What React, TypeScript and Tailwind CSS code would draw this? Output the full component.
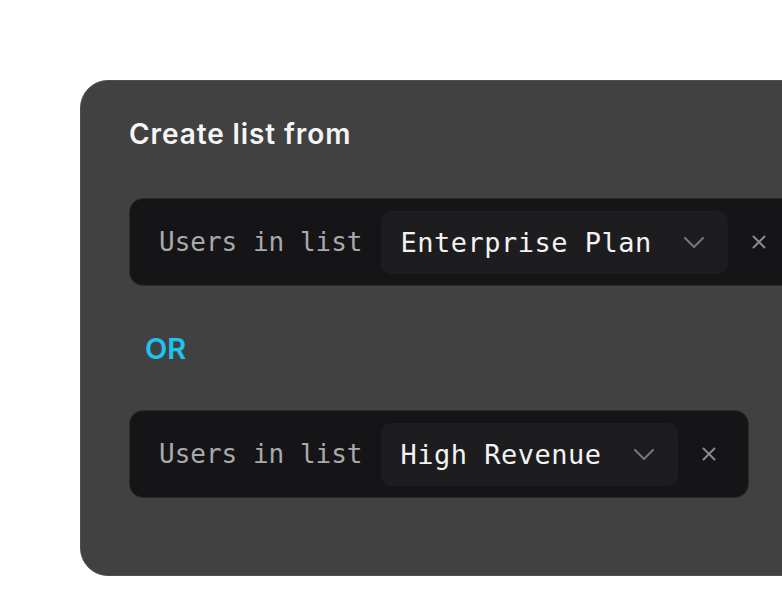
import React from 'react';

interface ListRowProps {
  value: string;
}

const mono = { fontFamily: '"DejaVu Sans Mono", "Liberation Mono", monospace' };

function Chevron() {
  return (
    <svg width="20" height="11" viewBox="0 0 20 11" fill="none" className="shrink-0">
      <polyline points="1,1 10,10 19,1" stroke="#777779" strokeWidth="2" strokeLinecap="round" strokeLinejoin="round" />
    </svg>
  );
}

function CloseIcon() {
  return (
    <svg width="14" height="14" viewBox="0 0 14 14" fill="none" className="shrink-0">
      <path d="M1.5 1.5l11 11M12.5 1.5l-11 11" stroke="#8a8a8c" strokeWidth="2" strokeLinecap="round" />
    </svg>
  );
}

// One "Users in list [select] x" filter row
function ListRow({ value }: ListRowProps) {
  return (
    <div className="inline-flex items-center h-[88px] rounded-[14px] bg-[#151517] border border-[#2c2c2e] pl-[29px] pr-[32px] shrink-0">
      <span className="text-[26px] leading-none text-[#a9a9ab] whitespace-nowrap" style={mono}>
        Users in list
      </span>
      <div className="ml-[18px] flex items-center h-[63px] rounded-[10px] bg-[#1d1d1f] pl-[20px] pr-[24px]">
        <span className="text-[27px] leading-none tracking-[0.5px] text-[#f3f3f3] whitespace-nowrap" style={mono}>
          {value}
        </span>
        <span className="ml-[32px] flex items-center">
          <Chevron />
        </span>
      </div>
      <span className="ml-[24px] flex items-center">
        <CloseIcon />
      </span>
    </div>
  );
}

export default function App() {
  return (
    <div className="w-[782px] h-[592px] bg-white overflow-hidden pt-[80px] pl-[80px]">
      <div
        className="w-[760px] rounded-[28px] bg-[#414141] border border-[#4f4f4f] pt-[37px] pl-[48px] pb-[77px] flex flex-col items-start"
        style={{ fontFamily: 'Inter, "Noto Sans", sans-serif' }}
      >
        <h2 className="text-[28px] leading-[32px] font-semibold text-[#f5f5f5] tracking-[0.9px]">
          Create list from
        </h2>
        <div className="mt-[48px]">
          <ListRow value="Enterprise Plan" />
        </div>
        <div className="mt-[47px] ml-[16px] text-[29px] leading-[32px] font-semibold text-[#1ec3ef]">OR</div>
        <div className="mt-[45px]">
          <ListRow value="High Revenue" />
        </div>
      </div>
    </div>
  );
}
